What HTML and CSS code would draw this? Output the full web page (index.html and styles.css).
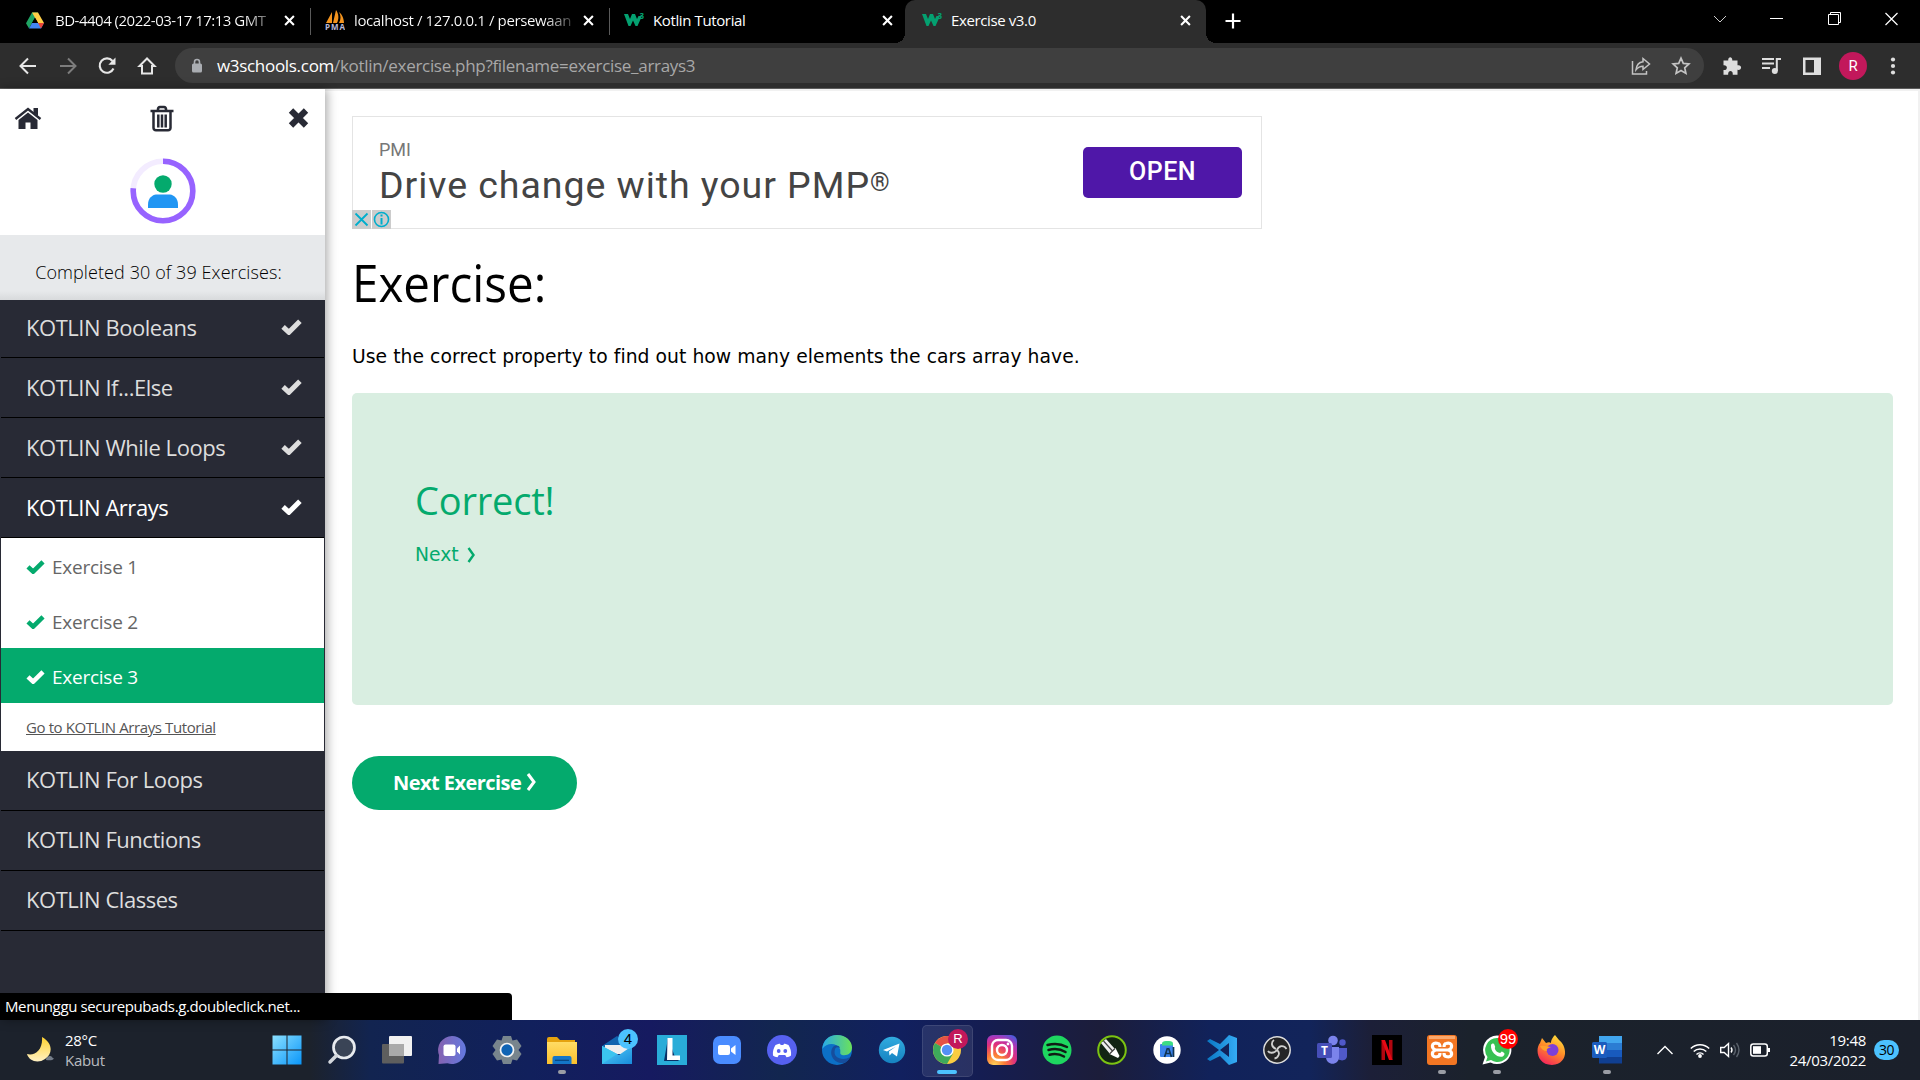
FILE: index.html
```html
<!DOCTYPE html>
<html lang="en">
<head>
<meta charset="utf-8">
<title>Exercise v3.0</title>
<link rel="stylesheet" href="styles.css">
</head>
<body>
<svg width="0" height="0" class="defs">
  <defs>
    <symbol id="check" viewBox="0 0 20 16"><path d="M2 8.300l5.500 5.200L18 3" fill="none" stroke="currentColor" stroke-width="4.800"/></symbol>
    <symbol id="tabx" viewBox="0 0 10 10"><path d="M1 1l8 8M9 1l-8 8" stroke="#fff" stroke-width="1.900"/></symbol>
    <symbol id="w3" viewBox="0 0 20 16"><path d="M0 2h4l2 5 2-5h3l2 5 1.500-3h3.500L13.500 14h-2L9 8.500 6.500 14h-2z" fill="#04a070"/><text x="15.500" y="6.500" font-size="8" font-weight="700" fill="#04a070">3</text></symbol>
    <linearGradient id="gwin" x2="1" y2="1"><stop stop-color="#8be0ff"/><stop offset="1" stop-color="#0a96f8"/></linearGradient>
    <linearGradient id="gchat" x2="1"><stop stop-color="#8562b0"/><stop offset="1" stop-color="#6379e0"/></linearGradient>
    <linearGradient id="gfold" x2="0" y2="1"><stop stop-color="#ffdc65"/><stop offset="1" stop-color="#fcc02c"/></linearGradient>
    <linearGradient id="gedge" x2="1"><stop stop-color="#28a9e8"/><stop offset="1" stop-color="#6be25a"/></linearGradient>
    <linearGradient id="gtele" x2="0" y2="1"><stop stop-color="#31abdf"/><stop offset="1" stop-color="#1682c1"/></linearGradient>
    <radialGradient id="ginsta" cx=".25" cy="1" r="1.150"><stop stop-color="#ffd45a"/><stop offset=".3" stop-color="#fb7b36"/><stop offset=".6" stop-color="#e0307c"/><stop offset=".8" stop-color="#b035b5"/><stop offset="1" stop-color="#4b5bdc"/></radialGradient>
    <linearGradient id="gfox" x1=".8" x2=".3" y2="1"><stop stop-color="#ffe43c"/><stop offset=".5" stop-color="#ff8a28"/><stop offset="1" stop-color="#f4245c"/></linearGradient>
    <linearGradient id="gmoon" x2="0" y2="1"><stop stop-color="#ffd22e"/><stop offset="1" stop-color="#fff1c4"/></linearGradient>
    <linearGradient id="gmail" x2="1" y2="1"><stop stop-color="#57d1f8"/><stop offset="1" stop-color="#188bdc"/></linearGradient>
    <linearGradient id="gcode" x2="1"><stop stop-color="#0a77c2"/><stop offset="1" stop-color="#35acf5"/></linearGradient>
  </defs>
</svg>

<header class="tabs">
  <div class="tab">
    <svg class="fav" viewBox="0 0 18 16"><path d="M6 0h6L6 10.500 3 16 0 10.800z" fill="#1fa463"/><path d="M6 0h6l6 10.500h-6z" fill="#ffcf48"/><path d="M6 10.500h12L15 16H3z" fill="#4285f4"/><path d="M12 10.500h6L15 16z" fill="#ea4335"/><path d="M9 5.300l3 5.200H6z" fill="#000"/></svg>
    <span class="tab-title t1">BD-4404 (2022-03-17 17:13 GMT</span>
    <svg class="x"><use href="#tabx"/></svg>
  </div>
  <div class="tab">
    <svg class="fav" viewBox="0 0 20 20"><path d="M1 13L7 2v11zM8 13L11 0c3 4 3 9 1 13zM14 13c2-4 2-7 0-11 3 2 5 7 5 11z" fill="#f4941e"/><text x="0" y="19.500" font-size="8" font-weight="700" fill="#b8b8d8" textLength="20">PMA</text></svg>
    <span class="tab-title t2">localhost / 127.0.0.1 / persewaan</span>
    <svg class="x"><use href="#tabx"/></svg>
  </div>
  <div class="tab last">
    <svg class="fav w3"><use href="#w3"/></svg>
    <span class="tab-title t3">Kotlin Tutorial</span>
    <svg class="x"><use href="#tabx"/></svg>
  </div>
  <div class="tab active">
    <svg class="fav w3"><use href="#w3"/></svg>
    <span class="tab-title t4">Exercise v3.0</span>
    <svg class="x"><use href="#tabx"/></svg>
  </div>
  <svg class="plus" viewBox="0 0 16 16"><path d="M8 0.500v15M.5 8h15" stroke="#fff" stroke-width="2.200"/></svg>
  <div class="window-controls">
    <svg viewBox="0 0 14 14"><path d="M1 4l6 6 6-6" fill="none" stroke="#ccc"/></svg>
    <svg viewBox="0 0 14 14"><path d="M0 6.500h13" stroke="#fff"/></svg>
    <svg viewBox="0 0 14 14"><path d="M.5 2.500h10v10H.5zM2.500 2.500V.5h10v10h-2" fill="none" stroke="#fff"/></svg>
    <svg viewBox="0 0 14 14"><path d="M.5 1l12 12M12.500 1l-12 12" stroke="#fff" stroke-width="1.200"/></svg>
  </div>
</header>

<nav class="toolbar">
  <div class="navbtns">
    <svg viewBox="0 0 20 20"><path d="M18 10H2.500M10 2.500L2.500 10l7.500 7.500" fill="none" stroke="#e6e6e6" stroke-width="2"/></svg>
    <svg viewBox="0 0 20 20"><path d="M2 10h15.500M10 2.500l7.500 7.500-7.500 7.500" fill="none" stroke="#7d7d7d" stroke-width="2"/></svg>
    <svg viewBox="0 0 20 20"><path d="M16.500 12.500A7.200 7.200 0 1 1 15.500 5" fill="none" stroke="#e6e6e6" stroke-width="2.100"/><path d="M18.500 1.500v7.200h-7.200z" fill="#e6e6e6"/></svg>
    <svg viewBox="0 0 20 20"><path d="M10 2.500L2.500 10H5v7.500h10V10h2.500z" fill="none" stroke="#e6e6e6" stroke-width="2"/></svg>
  </div>
  <div class="omnibox">
    <svg class="lock" viewBox="0 0 12 16"><rect x="1" y="5.500" width="10" height="9" rx="1.500" fill="#aaadb2"/><path d="M3.500 6V4a2.500 2.500 0 0 1 5 0V6" fill="none" stroke="#aaadb2" stroke-width="1.600"/></svg>
    <span class="url"><b>w3schools.com</b>/kotlin/exercise.php?filename=exercise_arrays3</span>
    <svg viewBox="0 0 20 20"><path d="M1.500 5v13h14v-3" fill="none" stroke="#c4c4c4" stroke-width="1.500"/><path d="M12 2.500l6.500 5.500-6.500 5.500v-3.200c-3 0-5 1-7 3.500.5-4.500 3-7.500 7-8z" fill="none" stroke="#c4c4c4" stroke-width="1.500"/></svg>
    <svg viewBox="0 0 20 20"><path d="M10 2.200l2.300 5.200 5.600.6-4.200 3.800 1.200 5.600-4.900-2.900-4.900 2.900 1.200-5.600L2.100 8l5.600-.6z" fill="none" stroke="#c4c4c4" stroke-width="1.700"/></svg>
  </div>
  <div class="exts">
    <svg viewBox="0 0 20 20"><path d="M1.500 4.500h4.800C5.500 0 11 0 10.200 4.500h5.300v4.800c4.800-1 4.800 5.400 0 4.500v5h-4.800c.8-5-5.200-5-4.500 0H1.500V14c4.500.5 4.500-5.200 0-4.700z" fill="#dedede"/></svg>
    <svg viewBox="0 0 20 20"><path d="M0 3h12M0 7.500h12M0 12h8" stroke="#dedede" stroke-width="2"/><path d="M14.800 15V3H19" fill="none" stroke="#dedede" stroke-width="2"/><circle cx="12.800" cy="15" r="3" fill="#dedede"/></svg>
    <svg viewBox="0 0 20 20"><path d="M1 1.500h18v17.500H1zM3.500 4v12.500h8.500V4z" fill="#dedede" fill-rule="evenodd"/></svg>
    <span class="profile">R</span>
    <svg viewBox="0 0 20 20"><g fill="#dedede"><circle cx="10" cy="3.500" r="2.100"/><circle cx="10" cy="10" r="2.100"/><circle cx="10" cy="16.500" r="2.100"/></g></svg>
  </div>
</nav>

<div class="page">
  <aside class="sidebar">
    <div class="side-top">
      <div class="side-icons">
        <svg width="28" height="22" viewBox="0 0 28 22"><path d="M1.500 12L14 2l12.500 10" fill="none" stroke="#282a35" stroke-width="2.400"/><path d="M19.500 1H24v8l-4.500-3.500zM14 5.500L23.500 13v9h-7v-6.500h-5V22h-7v-9z" fill="#282a35"/></svg>
        <svg width="24" height="27" viewBox="0 0 24 27"><path d="M0.500 6h23M8 6V4a2.200 2.200 0 0 1 2-2h4a2.200 2.200 0 0 1 2 2v2" fill="none" stroke="#282a35" stroke-width="2.600"/><path d="M3.500 6.500V23a2.500 2.500 0 0 0 2.500 2.300h12a2.500 2.500 0 0 0 2.500-2.300V6.500M8.300 9.500v13M12 9.500v13M15.700 9.500v13" fill="none" stroke="#282a35" stroke-width="2.500"/></svg>
        <svg width="21" height="22" viewBox="0 0 21 22"><path d="M3 3.500l15 15M18 3.500l-15 15" stroke="#282a35" stroke-width="6.200"/></svg>
      </div>
      <svg class="avatar" width="66" height="66" viewBox="0 0 66 66"><circle cx="33" cy="33" r="29.800" fill="none" stroke="#f3ecff" stroke-width="5.600"/><circle cx="33" cy="33" r="29.800" fill="none" stroke="#9763ff" stroke-width="5.600" pathLength="100" stroke-dasharray="76.500 23.500" transform="rotate(-90 33 33)"/><circle cx="33" cy="26" r="8.700" fill="#04aa6d"/><path d="M18 50v-3.500C18 40 22.500 37 26 36.500h14c4 .5 8 4 8 10V50z" fill="#2196f3"/></svg>
    </div>
    <div class="completed"><span>Completed 30 of 39 Exercises:</span></div>
    <div class="menu">
      <a class="item"><span>KOTLIN Booleans</span><svg><use href="#check"/></svg></a>
      <a class="item"><span>KOTLIN If...Else</span><svg><use href="#check"/></svg></a>
      <a class="item"><span>KOTLIN While Loops</span><svg><use href="#check"/></svg></a>
      <a class="item open"><span>KOTLIN Arrays</span><svg><use href="#check"/></svg></a>
      <div class="sub">
        <a><svg><use href="#check"/></svg><span>Exercise 1</span></a>
        <a><svg><use href="#check"/></svg><span>Exercise 2</span></a>
        <a class="current"><svg><use href="#check"/></svg><span>Exercise 3</span></a>
        <a class="tutorial"><span>Go to KOTLIN Arrays Tutorial</span></a>
      </div>
      <a class="item below"><span>KOTLIN For Loops</span></a>
      <a class="item below"><span>KOTLIN Functions</span></a>
      <a class="item below"><span>KOTLIN Classes</span></a>
    </div>
    <div class="status">Menunggu securepubads.g.doubleclick.net...</div>
  </aside>

  <main class="content">
    <div class="ad">
      <div class="ad-text">
        <div class="ad-brand">PMI</div>
        <div class="ad-head">Drive change with your PMP<sup>®</sup></div>
      </div>
      <span class="ad-btn">OPEN</span>
      <div class="ad-marks">
        <svg viewBox="0 0 19 19"><path d="M3.500 3.500l12 12M15.500 3.500l-12 12" stroke="#00aecd" stroke-width="1.800"/></svg>
        <svg viewBox="0 0 19 19"><circle cx="9.500" cy="9.500" r="7" fill="none" stroke="#00aecd" stroke-width="1.600"/><path d="M9.500 8v6.500M9.500 4.500v2" stroke="#00aecd" stroke-width="2"/></svg>
      </div>
    </div>
    <h1>Exercise:</h1>
    <p class="task">Use the correct property to find out how many elements the cars array have.</p>
    <section class="result">
      <h2>Correct!</h2>
      <a><span>Next</span><svg class="gt" viewBox="0 0 9 16"><path d="M1.500 1l5 7-5 7" fill="none" stroke="currentColor" stroke-width="2.400"/></svg></a>
    </section>
    <a class="next"><span>Next Exercise</span><svg class="gt2" viewBox="0 0 11 18"><path d="M2 1l6 8-6 8" fill="none" stroke="currentColor" stroke-width="3"/></svg></a>
  </main>
</div>

<footer class="taskbar">
  <div class="weather">
    <svg width="28" height="26" viewBox="0 0 28 26"><path d="M15 0c11 6 11 17 3 22C11 27 2 24 0 17c8 2 16-4 15-17z" fill="url(#gmoon)"/><path d="M19 23c0-3 3-4 4-4 2 0 2 2 4 2.500-1 2-5 2-8 1.500z" fill="#8a93a0" opacity=".8"/></svg>
    <div class="weather-text"><span>28°C</span><span class="dim">Kabut</span></div>
  </div>
  <div class="apps">
    <div class="app"><svg viewBox="0 0 30 30"><path d="M.5.5h14v14H.5zM15.500.5h14v14h-14zM.5 15.500h14v14H.5zM15.500 15.500h14v14h-14z" fill="url(#gwin)"/></svg></div>
    <div class="app"><svg viewBox="0 0 30 30"><circle cx="17" cy="12.500" r="10.500" fill="#3a4456" stroke="#e8ebef" stroke-width="2.700"/><path d="M9.500 20.500L3 27" stroke="#d3d7dc" stroke-width="3.500" stroke-linecap="round"/></svg></div>
    <div class="app"><svg viewBox="0 0 30 30"><rect x="0" y="9" width="22" height="19.500" rx="1" fill="#5e5e5e"/><rect x="7" y="1" width="23" height="20" rx="1" fill="#f1f1f1"/><path d="M7 9h15v12H7z" fill="#aaa"/></svg></div>
    <div class="app"><svg viewBox="0 0 30 30"><path d="M15 1a14 14 0 1 1-4.500 27.300L1.500 29 2 20A14 14 0 0 1 15 1z" fill="url(#gchat)"/><rect x="6.500" y="9.500" width="12" height="11.500" rx="2" fill="#fff"/><path d="M20 13.500l3-3v9l-3-3z" fill="#fff"/></svg></div>
    <div class="app"><svg viewBox="0 0 30 30"><path d="M11 1h8l1.500 4.500 4.500-1L29.500 11l-3 4 3 4-4.500 6.500-4.500-1L19 29h-8l-1.500-4.500-4.500 1L.5 19l3-4-3-4L5 4.500l4.500 1z" fill="#78858d"/><circle cx="15" cy="15" r="6.500" fill="#1064b4" stroke="#f4f4f4" stroke-width="1.700"/></svg></div>
    <div class="app run"><svg viewBox="0 0 30 30"><path d="M0 4a2 2 0 0 1 2-2h8l3 3h15v6H0z" fill="#e5a30f"/><path d="M0 7h30v22H0z" fill="url(#gfold)"/><path d="M5.500 29v-6a2 2 0 0 1 2-2h15a2 2 0 0 1 2 2v6z" fill="#1476c8"/><path d="M8 25.300h14" stroke="#07457e" stroke-width="1.200"/></svg></div>
    <div class="app"><svg viewBox="0 0 30 30"><path d="M0 11L15 1l15 10v4H0z" fill="#1164af"/><path d="M3 10h24v9H3z" fill="#eee"/><path d="M0 11l17 9 13-9v18H0z" fill="url(#gmail)"/><path d="M0 11l15 8L0 29z" fill="#3bc4ef"/></svg><span class="badge blue">4</span></div>
    <div class="app"><svg viewBox="0 0 30 30"><path d="M0 0h30v30H0z" fill="#29acd8"/><path d="M7 26l4-23 7 19 4 4z" fill="#0a3166"/><path d="M10.500 3h5v17.500H23V25H10z" fill="#fff"/></svg></div>
    <div class="app"><svg viewBox="0 0 30 30"><rect x="1" y="1" width="28" height="28" rx="7" fill="#4a8cff"/><rect x="6" y="10" width="12" height="10" rx="2" fill="#fff"/><path d="M19 13.500l4.500-3.500v10L19 16.500z" fill="#fff"/></svg></div>
    <div class="app"><svg viewBox="0 0 30 30"><circle cx="15" cy="15" r="15" fill="#5661f0"/><path d="M8.500 10c2-1 3.500-1.300 4.500-1.300l.7 1.200h2.600l.7-1.200c1 0 2.500.3 4.500 1.300 2 3.500 3 6.500 2.500 10.500-1.500 1-2.500 1.500-4.500 1.700l-1.300-2.200h-6.400l-1.300 2.200c-2-.2-3-.7-4.500-1.700C5.500 16.500 6.500 13.500 8.500 10z" fill="#fff"/><circle cx="11.700" cy="16" r="1.900" fill="#5661f0"/><circle cx="18.300" cy="16" r="1.900" fill="#5661f0"/></svg></div>
    <div class="app"><svg viewBox="0 0 30 30"><circle cx="15" cy="15" r="15" fill="#0c70c7"/><path d="M.3 14C1 5 7 0 15 0c9 0 15 6 15 12.500 0 6-5 8.500-10 7.500-3-1-1-3-2-6C15 8 5 7 .3 14z" fill="url(#gedge)"/><path d="M11 12c-5 7 1 17 11 16 3-1 5-3 6-6-6 4-18 2-15-8 1-2 3-2 5-1-1-3-5-3-7-1z" fill="#164e9d"/></svg></div>
    <div class="app"><svg viewBox="0 0 30 30"><circle cx="15" cy="15" r="13.200" fill="url(#gtele)"/><path d="M6 15l16.500-6.500L20 21.500l-5-3.500-2.500 2.500-.5-4 7-5-9 5z" fill="#fff"/></svg></div>
    <div class="app focus run"><svg viewBox="0 0 30 30"><circle cx="15" cy="15" r="14" fill="#fbc830"/><path d="M15 15L2.900 8A14 14 0 0 1 27.100 8H15z" fill="#e34133"/><path d="M2.900 8A14 14 0 0 0 15 29l6-10.500L15 15z" fill="#2ba14b"/><circle cx="15" cy="15" r="6.600" fill="#fff"/><circle cx="15" cy="15" r="5.200" fill="#4285f4"/></svg><span class="badge rose">R</span></div>
    <div class="app"><svg viewBox="0 0 30 30"><rect width="30" height="30" rx="6" fill="url(#ginsta)"/><rect x="5" y="5" width="20" height="20" rx="6" fill="none" stroke="#fff" stroke-width="2.400"/><circle cx="15" cy="15" r="5" fill="none" stroke="#fff" stroke-width="2.400"/><circle cx="21" cy="9" r="1.400" fill="#fff"/></svg></div>
    <div class="app"><svg viewBox="0 0 30 30"><circle cx="15" cy="15" r="14.500" fill="#1ed760"/><path d="M5.500 10c7-2 14-1 19.500 2M6.500 15c6-1.600 12-1 17 2M7.500 19.700c5-1.200 10-.8 14.500 1.800" fill="none" stroke="#101c14" stroke-width="2.500" stroke-linecap="round"/></svg></div>
    <div class="app"><svg viewBox="0 0 30 30"><circle cx="15" cy="15" r="13.800" fill="#122414" stroke="#7cc312" stroke-width="2"/><path d="M4 8l5-4 9 10-5 5z" fill="#eee"/><path d="M12.500 19l6-6 4 8-1.500 2z" fill="#fff"/><path d="M6.500 6L15.500 16M12.500 19l5.500-5.500" fill="none" stroke="#444" stroke-width="1.200"/></svg></div>
    <div class="app"><svg viewBox="0 0 30 30"><circle cx="15" cy="15" r="13.700" fill="#fff"/><rect x="8" y="9" width="13" height="13" rx="1" fill="#3c84ec"/><path d="M10 10.500V8.500a4 2.500 0 0 1 4-2.500h3a4 2.500 0 0 1 4 2.500v2z" fill="#3ddc84"/><path d="M15.500 13l-3 9M16.500 13l3 9M13.500 18.500h4M21.500 12v10" stroke="#113452" stroke-width="1.700"/></svg></div>
    <div class="app"><svg viewBox="0 0 30 30"><path d="M22 0l8 3v24l-8 3-9-9-10 5-3-2 12-9L0 6l3-2 10 5zM22 8l-9 7 9 7z" fill="url(#gcode)" fill-rule="evenodd"/></svg></div>
    <div class="app"><svg viewBox="0 0 30 30"><circle cx="15" cy="15" r="13.200" fill="#242426" stroke="#ddd" stroke-width="1.500"/><path d="M14 14C9 12 9 7 12 5M15 15c2-5 7-5 9.500-1M15 15c4 3 1 8-2.500 8.500M15 15c-3 4-8 3-9 1" fill="none" stroke="#d0d0d0" stroke-width="1.800"/></svg></div>
    <div class="app"><svg viewBox="0 0 30 30"><circle cx="16" cy="5.500" r="4.800" fill="#7b83eb"/><circle cx="25.500" cy="7.500" r="3.200" fill="#5059c9"/><path d="M20 13h10v8c0 4-5 6-9 3z" fill="#5059c9"/><path d="M9 12h13v10c0 9-13 9-13 0z" fill="#7b83eb"/><rect x="0" y="8" width="15" height="15" rx="1.500" fill="#464eb8"/><text x="7.500" y="20" text-anchor="middle" font-size="12" font-weight="700" fill="#fff">T</text></svg></div>
    <div class="app"><svg viewBox="0 0 30 30"><path d="M0 0h30v30H0z" fill="#000"/><path d="M9.500 5H13v20H9.500zM17 5h3.500v20H17z" fill="#b1060f"/><path d="M9.500 5H13l7.500 20H17z" fill="#e50914"/></svg></div>
    <div class="app run"><svg viewBox="0 0 30 30"><rect width="30" height="30" rx="3" fill="#f27623"/><path d="M2 1h26v3H2z" fill="#f9a86d"/><path d="M11 8.500c-7-2-7 5-2.500 6.500C4 16.500 4 23.500 11 21.500q2-.5 2-3.500M19 8.500c7-2 7 5 2.500 6.500 4.500 1.500 4.500 8.500-2.500 6.500q-2-.5-2-3.500M13 12q0-3-2-3.500M17 12q0-3 2-3.500M9 15h12" fill="none" stroke="#fff" stroke-width="3.200"/></svg></div>
    <div class="app run"><svg viewBox="0 0 30 30"><path d="M15 .5a14.300 14.300 0 1 1-6.500 27L.5 29.500 3 22A14.300 14.300 0 0 1 15 .5z" fill="#fff"/><path d="M15 3a12 12 0 1 1-6 22l-5 1.500L5.500 22A12 12 0 0 1 15 3z" fill="#38c153"/><path d="M9 10c1-2 3-2 3.500 0l.7 2c-1.500 2 2 6 5 6l1.500-1.500c2 1 3.500 1.500 2.500 3.500-3 5-14-1-13.200-10z" fill="#fff"/></svg><span class="badge red">99</span></div>
    <div class="app"><svg viewBox="0 0 30 30"><path d="M5 3l4 5c2-1 4-1 5 0 0-4 3-7 4-8l4 5c9 7 9 24-7 25C0 30-2 14 3 8z" fill="url(#gfox)"/><circle cx="15.500" cy="15" r="6" fill="#7d3fd8"/><path d="M3 11c6-1 8 1 11 1-3 1-5 2-4 4-3 0-6-2-7-5z" fill="#ffa02c"/></svg></div>
    <div class="app run"><svg viewBox="0 0 30 30"><path d="M7 1h23v7H7z" fill="#41a5ee"/><path d="M7 8h23v7H7z" fill="#2b7cd3"/><path d="M7 15h23v7H7z" fill="#185abd"/><path d="M7 22h23v6.500H7z" fill="#103f91"/><rect x="0" y="7" width="15" height="16" rx="1.500" fill="#1b5cbe"/><text x="7.500" y="19" text-anchor="middle" font-size="12" font-weight="700" fill="#fff">W</text></svg></div>
  </div>
  <div class="tray">
    <svg width="16" height="20" viewBox="0 0 16 20"><path d="M.5 14L8 6.500l7.500 7.500" fill="none" stroke="#fff" stroke-width="1.400"/></svg>
    <svg class="wifi" width="20" height="20" viewBox="0 0 20 20"><path d="M.8 8.500a13 13 0 0 1 18.400 0M3.700 11.500a9 9 0 0 1 12.600 0M6.500 14.500a5 5 0 0 1 7 0" fill="none" stroke="#fff" stroke-width="1.500"/><circle cx="10" cy="16" r="1.900" fill="#fff"/></svg>
    <svg class="snd" width="20" height="20" viewBox="0 0 20 20"><path d="M.7 7.500h3.500l4.300-4v13l-4.300-4H.7z" fill="none" stroke="#fff" stroke-width="1.400"/><path d="M11 7.500q2 2.500 0 5" fill="none" stroke="#fff" stroke-width="1.400"/><path d="M13.500 5q4 5 0 10M16.500 3q5 7 0 14" fill="none" stroke="#59606a" stroke-width="1.400"/></svg>
    <svg class="bat" width="21" height="20" viewBox="0 0 21 20"><rect x=".8" y="4" width="16.500" height="12" rx="2.500" fill="none" stroke="#fff" stroke-width="1.500"/><rect x="3" y="6.200" width="8" height="7.600" fill="#fff"/><path d="M18 8h2v4h-2z" fill="#fff"/></svg>
    <div class="clock"><span>19:48</span><span class="date">24/03/2022</span></div>
    <span class="notif">30</span>
  </div>
</footer>
</body>
</html>
```
FILE: styles.css
```css
* { box-sizing: border-box; }
body { margin: 0; width: 1920px; height: 1080px; overflow: hidden; display: flex; flex-direction: column; background: #fff; font-family: "Open Sans", "Noto Sans", sans-serif; }
svg { display: block; flex: none; }
.defs { position: absolute; }
span { white-space: nowrap; }

.tabs { height: 43px; flex: none; background: #000; display: flex; align-items: stretch; padding-left: 12px; }
.tab { width: 299px; display: flex; align-items: center; padding: 0 15px 3px 14px; border-right: 1px solid #4a4a4a; border-image: linear-gradient(transparent 9px, #5a5a5a 9px, #5a5a5a 34px, transparent 34px) 1; color: #fff; font-size: 15px; }
.tab.last { width: 296px; border: 0; padding-right: 13px; }
.tab.active { width: 301px; margin-left: -1px; border: 0; background: #2d2d2d; border-radius: 10px 10px 0 0; padding: 0 15px 3px 17px; position: relative; }
.tab.active::before, .tab.active::after { content: ""; position: absolute; bottom: 0; width: 10px; height: 10px; }
.tab.active::before { left: -10px; background: radial-gradient(circle at 0 0, transparent 10px, #2d2d2d 10px); }
.tab.active::after { right: -10px; background: radial-gradient(circle at 100% 0, transparent 10px, #2d2d2d 10px); }
.fav { width: 20px; height: 20px; margin-right: 9px; }
.tab:first-child .fav { width: 18px; height: 17px; margin-right: 11px; }
.fav.w3 { height: 16px; }
.tab-title { flex: 1; letter-spacing: -0.38px; }
.t1, .t2 { background: linear-gradient(90deg, #fff 190px, #444 217px); background-clip: text; -webkit-background-clip: text; color: transparent; }
.t1 { letter-spacing: -0.5px; }
.x { width: 11px; height: 11px; }
.plus { width: 16px; height: 16px; margin: 13px 0 0 19px; }
.window-controls { margin-left: auto; display: flex; gap: 43.500px; padding: 12px 21px 0 0; }
.window-controls svg { width: 14px; height: 14px; }

.toolbar { height: 46px; flex: none; background: #2d2d2d; border-bottom: 1px solid #5c5c5c; display: flex; align-items: center; padding: 0 17px 0 18px; }
.navbtns { display: flex; gap: 19.700px; width: 157px; }
.navbtns svg, .omnibox svg, .exts svg { width: 20px; height: 20px; }
.omnibox { width: 1530px; height: 35px; border-radius: 18px; background: #3f3f3f; display: flex; align-items: center; padding: 0 13px 0 16px; gap: 20px; }
.omnibox .lock { width: 12px; height: 16px; margin-right: -6px; }
.url { flex: 1; color: #a8a8a8; font-size: 17px; letter-spacing: -0.3px; padding-bottom: 1px; }
.url b { font-weight: 400; color: #fff; }
.exts { display: flex; align-items: center; gap: 20px; margin-left: 18px; }
.profile { width: 28px; height: 28px; margin: 0 -4px 0 -3px; border-radius: 50%; background: #c2185b; color: #fff; font: 15px/28px Roboto, sans-serif; text-align: center; }

.page { flex: 1; display: flex; border-top: 2px solid #f1f1f1; border-right: 2px solid #f1f1f1; min-height: 0; }
.sidebar { width: 325px; margin-top: -2px; flex: none; background: #282a35; display: flex; flex-direction: column; box-shadow: 2px 0 10px rgba(0,0,0,.35); position: relative; }
.side-top { height: 146px; background: #fff; flex: none; }
.side-icons { display: grid; grid-template-columns: 1fr auto 1fr; align-items: center; height: 58px; padding: 0 16px 0 14px; }
.side-icons svg:last-child { justify-self: end; }
.avatar { margin: 11px auto 0; }
.completed { height: 65px; flex: none; background: linear-gradient(#e7e9eb 56px, #d8dadc); text-align: center; font-size: 18px; line-height: 74px; color: #000; font-weight: 300; padding-right: 8px; letter-spacing: .09px; }
.item { display: flex; align-items: center; justify-content: space-between; height: 60px; margin: 0 1px; padding: 0 22px 2px 25px; border-bottom: 1px solid #000; color: #ddd; font-size: 22px; letter-spacing: -.46px; }
.item:first-child { height: 58px; padding-bottom: 4px; }
.item.below { padding-bottom: 4px; }
.item svg { width: 21px; height: 17px; }
.item.open { color: #fff; }
.sub { margin: 0 1px; background: #fff; font-size: 19px; color: #666; letter-spacing: -.25px; }
.sub a { display: flex; align-items: center; height: 55px; padding: 2px 25px 0; gap: 7px; }
.sub svg { width: 19px; height: 15px; color: #04aa6d; }
.sub .current { background: #04aa6d; color: #fff; }
.sub .current svg { color: #fff; }
.sub .tutorial { height: 48px; padding-top: 0; font-size: 15px; text-decoration: underline; color: #555; letter-spacing: -.4px; }
.status { position: absolute; left: 0; bottom: 0; width: 512px; height: 27px; background: #000; border-radius: 0 4px 0 0; color: #fff; font-size: 15px; line-height: 27px; padding-left: 5px; letter-spacing: -0.38px; white-space: nowrap; }

.content { flex: 1; padding: 25px 25px 0 27px; display: flex; flex-direction: column; align-items: flex-start; }
.ad { width: 910px; height: 113px; border: 1px solid #e4e4e4; display: flex; align-items: center; justify-content: space-between; padding: 0 19px 0 26px; font-family: Roboto, sans-serif; position: relative; }
.ad-brand { font-size: 18px; line-height: 24px; color: #777; }
.ad-head { font-size: 37.500px; line-height: 46px; color: #444; letter-spacing: .95px; }
.ad-head sup { font-size: 25px; line-height: 0; vertical-align: 7px; letter-spacing: 0; }
.ad-btn { width: 159px; height: 51px; background: #4f17a8; border-radius: 5px; color: #fff; font-size: 25px; font-weight: 500; line-height: 50px; text-align: center; letter-spacing: .5px; }
.ad-marks { position: absolute; left: -1px; bottom: -1px; display: flex; gap: 1px; }
.ad-marks svg { width: 19px; height: 19px; background: #ccc; }
h1 { margin: 17px 0 0; font-weight: 400; font-size: 52px; line-height: 72px; color: #000; transform: scaleX(.915); transform-origin: 0 0; }
.task { margin: 25px 0 0; font: 18.750px/28px "DejaVu Sans", sans-serif; color: #000; letter-spacing: .05px; }
.result { align-self: stretch; height: 312px; margin-top: 22px; background: #d9eee1; border-radius: 5px; padding: 80px 63px; color: #04aa6d; }
.result h2 { margin: 0; font-weight: 400; font-size: 38px; line-height: 54px; letter-spacing: -.2px; }
.result a { display: flex; align-items: center; gap: 8px; margin-top: 14px; font: 18.750px/28px "DejaVu Sans", sans-serif; }
.result .gt { width: 9px; height: 16px; }
.next { display: flex; align-items: center; gap: 5px; height: 54px; width: 225px; margin-top: 51px; padding: 0 0 2px 41px; border-radius: 27px; background: #04aa6d; color: #fff; font-size: 20px; font-weight: 700; letter-spacing: -.55px; }
.gt2 { width: 11px; height: 18px; }

.taskbar { height: 60px; flex: none; display: flex; align-items: center; color: #fff; background: linear-gradient(90deg, #1c222c 0, #1c222c 310px, #122450 370px, #11205c 530px, #161a60 650px, #12264f 780px, #11205f 900px, #151d52 980px, #1c1d3a 1100px, #11225a 1210px, #12245a 1310px, #1c1f38 1370px, #1b222c 1470px, #1b202b); }
.weather { width: 259px; padding-left: 27px; display: flex; align-items: center; gap: 10px; }
.weather-text { display: flex; flex-direction: column; font-size: 15px; line-height: 20px; letter-spacing: -.3px; }
.dim { color: #b9bcc0; }
.apps { display: flex; height: 60px; }
.app { width: 55px; height: 60px; padding-top: 15px; display: flex; justify-content: center; position: relative; }
.app > svg { width: 30px; height: 30px; }
.app.run::after { content: ""; position: absolute; bottom: 6px; left: 24px; width: 8px; height: 4px; border-radius: 2px; background: #9a9da5; }
.app.focus::before { content: ""; position: absolute; left: 3px; top: 5px; width: 49px; height: 50px; border-radius: 5px; background: rgba(255,255,255,.09); border: 1px solid rgba(255,255,255,.1); }
.app.focus.run::after { left: 18px; width: 20px; background: #4cc2ff; }
.badge { position: absolute; left: 29px; top: 9px; width: 20px; height: 20px; border-radius: 50%; font: 15px/20px "Liberation Sans", sans-serif; text-align: center; }
.blue { background: #4cc2ff; color: #000; }
.rose { background: #c2185b; font-size: 13px; }
.red { background: #f00; }
.tray { flex: 1; display: flex; align-items: center; padding-left: 23px; font-size: 15px; }
.wifi { margin-left: 17px; }
.snd { margin-left: 10px; }
.bat { margin-left: 10px; }
.clock { display: flex; flex-direction: column; align-items: flex-end; width: 95px; line-height: 20px; letter-spacing: -.3px; padding-bottom: 1px; }
.notif { margin-left: 8px; width: 25px; height: 20px; border-radius: 10px; background: #4cc2ff; color: #000; font-size: 14px; line-height: 20px; text-align: center; letter-spacing: -.5px; }
```
